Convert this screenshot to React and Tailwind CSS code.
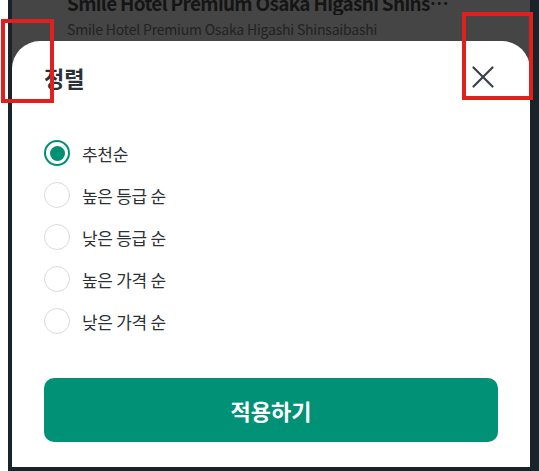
import React from "react";

const options = ["추천순", "높은 등급 순", "낮은 등급 순", "높은 가격 순", "낮은 가격 순"];

function Radio({ checked }) {
  return checked ? (
    <span className="flex h-[26px] w-[26px] shrink-0 items-center justify-center rounded-full border-2 border-[#009074] bg-white">
      <span className="h-[15px] w-[15px] rounded-full bg-[#009074]" />
    </span>
  ) : (
    <span className="h-[26px] w-[26px] shrink-0 rounded-full border-[1.5px] border-[#d7dae1] bg-white" />
  );
}

export default function App() {
  const font = { fontFamily: '"Noto Sans CJK KR", "Noto Sans", sans-serif' };
  return (
    <div className="relative h-[471px] w-[539px] overflow-hidden bg-white" style={font}>
      <div className="ml-[8px] flex h-[471px] w-[531px] flex-col border-b-4 border-l-4 border-r-[9px] border-[#1b232a] bg-[#454545]">
        <div className="h-[41px] shrink-0 overflow-hidden pl-[55px]">
          <div className="mt-[-9px] w-[392px] truncate text-[19px] font-bold leading-[24px] tracking-[-0.7px] text-[#151515]">
            Smile Hotel Premium Osaka Higashi Shinsaibashi
          </div>
          <div className="mt-[4px] text-[14px] leading-[20px] tracking-[-0.2px] text-[#222222]">
            Smile Hotel Premium Osaka Higashi Shinsaibashi
          </div>
        </div>
        <div className="flex flex-1 flex-col rounded-t-[28px] bg-white px-8">
          <div className="flex h-[72px] shrink-0 items-center justify-between">
            <h2 className="text-[22px] font-bold leading-none text-[#2b3136]">정렬</h2>
            <button className="flex h-[30px] w-[30px] items-center justify-center">
              <svg width="22" height="22" viewBox="0 0 22 22" fill="none" stroke="#394148" strokeWidth="2.2" strokeLinecap="round">
                <path d="M1.5 1.5 L20.5 20.5 M20.5 1.5 L1.5 20.5" />
              </svg>
            </button>
          </div>
          <div className="mt-[19px] flex flex-col">
            {options.map((o, i) => (
              <label key={o} className="flex h-[42px] items-center gap-[12px]">
                <Radio checked={i === 0} />
                <span className="text-[17px] leading-none tracking-[-0.3px] text-[#2c3136]">{o}</span>
              </label>
            ))}
          </div>
          <button className="mt-[36px] flex h-[64px] w-full items-center justify-center rounded-[10px] bg-[#009177] text-[22px] font-bold text-white">
            적용하기
          </button>
        </div>
      </div>
      <div className="pointer-events-none absolute left-[1px] top-[19px] h-[84px] w-[53px] border-4 border-[#e21f1f]" />
      <div className="pointer-events-none absolute left-[462px] top-[12px] h-[88px] w-[71px] border-4 border-[#e21f1f]" />
    </div>
  );
}
